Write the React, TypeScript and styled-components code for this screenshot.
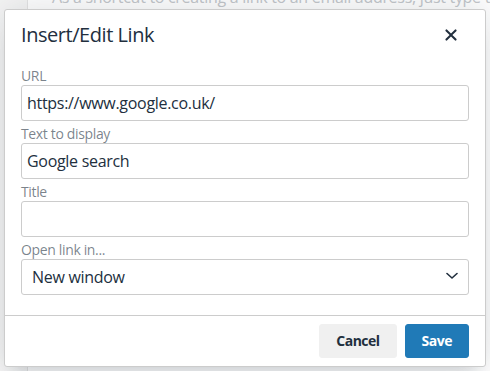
import styled, { createGlobalStyle } from "styled-components";

const GlobalStyle = createGlobalStyle`
  html, body {
    margin: 0;
    padding: 0;
    background: #ffffff;
    font-family: "Open Sans", "Liberation Sans", sans-serif;
  }
  * {
    box-sizing: border-box;
  }
`;

const Page = styled.div`
  position: relative;
  width: 490px;
  height: 371px;
  overflow: hidden;
  display: grid;
  grid-template-columns: 28px 1fr 6px;
`;

const Gutter = styled.div`
  background: #f5f5f5;
  border-right: 1px solid #e4e4e4;
`;

const EditorArea = styled.div`
  padding: 0 0 0 24px;
  background: #ffffff;
`;

const EditorText = styled.p`
  margin: -13px 0 0;
  font-size: 16px;
  line-height: 20px;
  color: #c4c7cb;
  white-space: nowrap;
  letter-spacing: -0.3px;
`;

const Scrollbar = styled.div`
  background: #f1f1f1;
  border-left: 1px solid #e2e2e2;
`;

const Dialog = styled.div`
  position: absolute;
  left: 4px;
  top: 9px;
  width: 482px;
  height: 358px;
  display: flex;
  flex-direction: column;
  background: #ffffff;
  border: 1px solid #cccccc;
  border-radius: 3px;
  box-shadow: 0 16px 16px -10px rgba(34, 47, 62, 0.15),
    0 0 40px 1px rgba(34, 47, 62, 0.15);
`;

const Header = styled.div`
  display: flex;
  align-items: center;
  justify-content: space-between;
  padding: 12px 16px 0;
`;

const Title = styled.h1`
  margin: 0;
  font-size: 20px;
  line-height: 26px;
  font-weight: 400;
  letter-spacing: -0.45px;
  color: #222f3e;
`;

const CloseButton = styled.button`
  width: 24px;
  height: 24px;
  margin-right: 6px;
  padding: 0;
  border: none;
  background: transparent;
  display: flex;
  align-items: center;
  justify-content: center;
  color: #222f3e;
  cursor: pointer;
`;

const Body = styled.div`
  flex: 1;
  display: flex;
  flex-direction: column;
  gap: 4px;
  padding: 19px 16px 0;
`;

const Field = styled.div`
  display: flex;
  flex-direction: column;
`;

const Label = styled.label`
  font-size: 14px;
  line-height: 18px;
  letter-spacing: -0.35px;
  color: rgba(34, 47, 62, 0.6);
`;

const Input = styled.input`
  width: 100%;
  height: 36px;
  padding: 5px 5px;
  border: 1px solid #cccccc;
  border-radius: 3px;
  font-family: inherit;
  font-size: 16px;
  letter-spacing: -0.3px;
  color: #222f3e;
  background: #ffffff;
  outline: none;
`;

const SelectWrap = styled.div`
  position: relative;
`;

const Select = styled.select`
  width: 100%;
  height: 36px;
  padding: 5px 32px 5px 10px;
  border: 1px solid #cccccc;
  border-radius: 3px;
  font-family: inherit;
  font-size: 16px;
  letter-spacing: -0.3px;
  color: #222f3e;
  background: #ffffff;
  appearance: none;
  outline: none;
`;

const Chevron = styled.svg`
  position: absolute;
  right: 11px;
  top: 11px;
  pointer-events: none;
`;

const Footer = styled.div`
  display: flex;
  justify-content: flex-end;
  gap: 8px;
  padding: 8px 16px;
  border-top: 1px solid #cccccc;
`;

const Button = styled.button<{ $primary?: boolean }>`
  height: 34px;
  padding: 4px 16px;
  border: 1px solid ${(p) => (p.$primary ? "#207ab7" : "#f0f0f0")};
  border-radius: 3px;
  background: ${(p) => (p.$primary ? "#207ab7" : "#f0f0f0")};
  color: ${(p) => (p.$primary ? "#ffffff" : "#222f3e")};
  font-family: inherit;
  font-size: 14px;
  font-weight: 700;
  line-height: 24px;
  letter-spacing: -0.5px;
  cursor: pointer;
`;

export default function App() {
  return (
    <Page>
      <GlobalStyle />
      <Gutter />
      <EditorArea>
        <EditorText>
          As a shortcut to creating a link to an email address, just type the address
        </EditorText>
      </EditorArea>
      <Scrollbar />

      <Dialog>
        <Header>
          <Title>Insert/Edit Link</Title>
          <CloseButton aria-label="Close">
            <svg width="24" height="24" viewBox="0 0 24 24">
              <path
                fill="currentColor"
                d="M17.3 8.2L13.4 12l3.9 3.8a1 1 0 0 1-1.5 1.5L12 13.4l-3.8 3.9a1 1 0 0 1-1.5-1.5l3.9-3.8-3.9-3.8a1 1 0 0 1 1.5-1.5l3.8 3.9 3.8-3.9a1 1 0 0 1 1.5 1.5z"
              />
            </svg>
          </CloseButton>
        </Header>

        <Body>
          <Field>
            <Label>URL</Label>
            <Input defaultValue="https://www.google.co.uk/" />
          </Field>
          <Field>
            <Label>Text to display</Label>
            <Input defaultValue="Google search" />
          </Field>
          <Field>
            <Label>Title</Label>
            <Input defaultValue="" />
          </Field>
          <Field>
            <Label>Open link in...</Label>
            <SelectWrap>
              <Select defaultValue="new">
                <option value="current">Current window</option>
                <option value="new">New window</option>
              </Select>
              <Chevron width="12" height="12" viewBox="0 0 12 12">
                <path
                  d="M1 3.5l5 4.5 5-4.5"
                  fill="none"
                  stroke="#222f3e"
                  strokeWidth="1.6"
                  strokeLinecap="round"
                  strokeLinejoin="round"
                />
              </Chevron>
            </SelectWrap>
          </Field>
        </Body>

        <Footer>
          <Button>Cancel</Button>
          <Button $primary>Save</Button>
        </Footer>
      </Dialog>
    </Page>
  );
}
